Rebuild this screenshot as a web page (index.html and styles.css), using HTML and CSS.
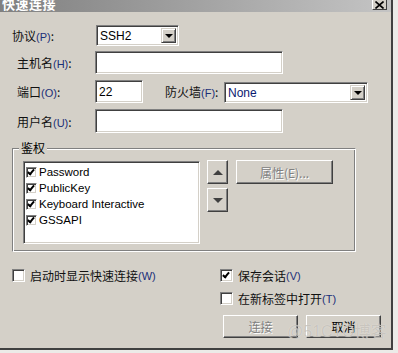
FILE: index.html
```html
<html>
  <head>
    <link rel="stylesheet" href="styles.css">
  </head>
  <body>
    <div class="dialog">
      <div class="titlebar">
        <span class="title">快速连接</span>
        <span class="close">
          <svg width="9" height="8" viewBox="0 0 9 8"><path d="M0.5 0.5L8.5 7.5M8.5 0.5L0.5 7.5" stroke="#000" stroke-width="1.6"/></svg>
        </span>
      </div>

      <div class="row row-proto">
        <label class="lbl lbl-first">协议<u>(P)</u>:</label>
        <div class="combo combo-proto">
          <span class="combo-text">SSH2</span>
          <span class="combo-btn"><i class="tri-down"></i></span>
        </div>
      </div>

      <div class="row row-host">
        <label class="lbl">主机名<u>(H)</u>:</label>
        <div class="field field-wide"></div>
      </div>

      <div class="row row-port">
        <label class="lbl">端口<u>(O)</u>:</label>
        <div class="field field-port">22</div>
        <label class="lbl lbl-fw">防火墙<u>(F)</u>:</label>
        <div class="combo combo-fw">
          <span class="combo-text">None</span>
          <span class="combo-btn"><i class="tri-down"></i></span>
        </div>
      </div>

      <div class="row row-user">
        <label class="lbl">用户名<u>(U)</u>:</label>
        <div class="field field-wide"></div>
      </div>

      <div class="group">
        <span class="legend">鉴权</span>
        <div class="listbox">
          <div class="item"><span class="check on"></span>Password</div>
          <div class="item"><span class="check on"></span>PublicKey</div>
          <div class="item"><span class="check on"></span>Keyboard Interactive</div>
          <div class="item"><span class="check on"></span>GSSAPI</div>
        </div>
        <div class="arrows">
          <div class="btn arrow-btn"><i class="tri-up"></i></div>
          <div class="btn arrow-btn"><i class="tri-down gray"></i></div>
        </div>
        <div class="btn btn-prop disabled">属性(E)...</div>
      </div>

      <div class="row row-opt1">
        <div class="opt opt-left"><span class="check"></span>启动时显示快速连接<u>(W)</u></div>
        <div class="opt opt-right"><span class="check on"></span>保存会话<u>(V)</u></div>
      </div>
      <div class="row row-opt2">
        <div class="opt opt-right"><span class="check"></span>在新标签中打开<u>(T)</u></div>
      </div>

      <div class="row row-buttons">
        <div class="btn btn-main disabled">连接</div>
        <div class="btn btn-main btn-cancel">取消</div>
      </div>

      <span class="watermark">@51CTO博客</span>
    </div>
  </body>
</html>
```

FILE: styles.css
```css
body {
  margin: 0;
  background: #ecebe8;
  font-family: "Liberation Sans", "Noto Sans CJK SC", sans-serif;
  font-size: 12px;
  color: #000;
}

.dialog {
  position: relative;
  width: 391px;
  height: 348px;
  background: #d4d0c8;
  border-right: 2px solid #404040;
  border-bottom: 2px solid #404040;
  overflow: hidden;
}

.titlebar {
  height: 12px;
  display: flex;
  justify-content: space-between;
  background: linear-gradient(to right, #808080, #c4c4c4);
  overflow: hidden;
}

.title {
  color: #fff;
  font-family: "Noto Sans CJK SC", sans-serif;
  font-weight: bold;
  font-size: 13px;
  line-height: 13px;
  margin: -3px 0 0 2px;
  letter-spacing: 0.5px;
}

.close {
  width: 13px;
  height: 9px;
  margin-right: 4px;
  background: #d4d0c8;
  border-left: 1px solid #fff;
  border-right: 1px solid #404040;
  border-bottom: 1px solid #404040;
  display: flex;
  align-items: center;
  justify-content: center;
}

.row {
  display: flex;
  align-items: center;
}

.lbl {
  width: 78px;
  margin-left: 17px;
  font-family: "Noto Sans CJK SC", sans-serif;
  font-size: 12px;
  color: #111;
}

.lbl u, .opt u {
  text-decoration: none;
  font-family: "Liberation Sans", sans-serif;
  font-size: 11px;
  color: #1b2f78;
}

.lbl-first {
  margin-left: 12px;
  width: 84px;
}

.row-proto { margin-top: 13px; height: 21px; }
.row-host { margin-top: 5px; height: 23px; }
.row-port { margin-top: 6px; height: 23px; }
.row-user { margin-top: 6px; height: 24px; }

.field, .combo, .listbox {
  box-sizing: border-box;
  background: #fff;
  border-top: 1px solid #808080;
  border-left: 1px solid #808080;
  border-bottom: 1px solid #fff;
  border-right: 1px solid #fff;
  box-shadow: inset 1px 1px #404040, inset -1px -1px #d4d0c8;
}

.field {
  height: 100%;
  padding: 4px 3px 0;
  font-size: 12px;
}

.field-wide { width: 188px; }
.field-port { width: 48px; }

.combo {
  height: 21px;
  display: flex;
  align-items: center;
  justify-content: space-between;
  padding: 2px;
}

.combo-text {
  padding-left: 1px;
  font-size: 12px;
}

.combo-fw .combo-text { color: #0a1a70; }

.combo-btn {
  box-sizing: border-box;
  width: 15px;
  height: 15px;
  background: #d4d0c8;
  border-top: 1px solid #d4d0c8;
  border-left: 1px solid #d4d0c8;
  border-right: 1px solid #404040;
  border-bottom: 1px solid #404040;
  box-shadow: inset 1px 1px #fff, inset -1px -1px #808080;
  display: flex;
  align-items: center;
  justify-content: center;
}

.combo-proto { width: 83px; }

.lbl-fw {
  margin-left: 22px;
  width: 59px;
}

.combo-fw {
  width: 144px;
  margin-top: 2px;
}

.tri-down, .tri-up {
  width: 0;
  height: 0;
  border-left: 4px solid transparent;
  border-right: 4px solid transparent;
}

.tri-down { border-top: 4px solid #000; }
.tri-up { border-bottom: 5px solid #404040; border-left-width: 5px; border-right-width: 5px; }
.tri-down.gray { border-top: 5px solid #404040; border-left-width: 5px; border-right-width: 5px; }

.group {
  position: relative;
  box-sizing: border-box;
  width: 344px;
  height: 104px;
  margin: 15px 0 0 12px;
  border-top: 1px solid #808080;
  border-left: 1px solid #808080;
  border-bottom: 1px solid #fff;
  border-right: 1px solid #fff;
  box-shadow: inset 1px 1px #fff, inset -1px -1px #808080;
  display: flex;
  align-items: flex-start;
  padding: 12px 0 0 10px;
}

.legend {
  position: absolute;
  left: 6px;
  top: -9px;
  padding: 0 2px;
  background: #d4d0c8;
  font-family: "Noto Sans CJK SC", sans-serif;
  font-size: 12px;
  line-height: 16px;
}

.listbox {
  width: 177px;
  height: 83px;
  padding: 2px 0 0 2px;
}

.item {
  height: 16px;
  display: flex;
  align-items: center;
  font-size: 11.5px;
  color: #000;
}

.item .check {
  width: 11px;
  height: 11px;
  margin-right: 2px;
}

.check {
  box-sizing: border-box;
  display: inline-block;
  width: 13px;
  height: 13px;
  background: #fff;
  border-top: 1px solid #808080;
  border-left: 1px solid #808080;
  border-bottom: 1px solid #fff;
  border-right: 1px solid #fff;
  box-shadow: inset 1px 1px #404040, inset -1px -1px #d4d0c8;
  position: relative;
  flex: none;
}

.check.on::after {
  content: "";
  position: absolute;
  left: 2px;
  top: 1px;
  width: 2px;
  height: 5px;
  border-right: 2px solid #000;
  border-bottom: 2px solid #000;
  transform: rotate(40deg);
  transform-origin: 50% 50%;
  margin-left: 1px;
}

.item .check.on::after {
  left: 1px;
  top: 0px;
}

.btn {
  box-sizing: border-box;
  background: #d4d0c8;
  border-top: 1px solid #fff;
  border-left: 1px solid #fff;
  border-right: 1px solid #404040;
  border-bottom: 1px solid #404040;
  box-shadow: inset -1px -1px #808080;
  display: flex;
  align-items: center;
  justify-content: center;
  font-family: "Noto Sans CJK SC", sans-serif;
  font-size: 12px;
}

.disabled {
  color: #808080;
  text-shadow: 1px 1px #fff;
}

.arrows {
  margin: -1px 0 0 7px;
  display: flex;
  flex-direction: column;
  gap: 4px;
}

.arrow-btn {
  width: 21px;
  height: 24px;
}

.btn-prop {
  width: 97px;
  height: 24px;
  margin: -1px 0 0 8px;
}

.opt {
  display: flex;
  align-items: center;
  font-family: "Noto Sans CJK SC", sans-serif;
  font-size: 12px;
  color: #111;
}

.opt .check { margin-right: 5px; }

.opt-left {
  margin-left: 12px;
  width: 208px;
}

.opt-right { margin-left: 0; }

.row-opt1 { margin-top: 17px; height: 13px; }
.row-opt2 { margin-top: 10px; height: 13px; padding-left: 220px; }

.row-buttons {
  margin-top: 10px;
  padding-left: 223px;
  gap: 8px;
}

.btn-main {
  width: 75px;
  height: 23px;
}

.watermark {
  position: absolute;
  left: 287px;
  top: 323px;
  font-family: "Liberation Sans", "Noto Sans CJK SC", sans-serif;
  font-size: 16px;
  line-height: 18px;
  color: rgba(190, 186, 178, 0.75);
  text-shadow: 0 0 1px rgba(255, 255, 255, 0.6);
  pointer-events: none;
}
```
